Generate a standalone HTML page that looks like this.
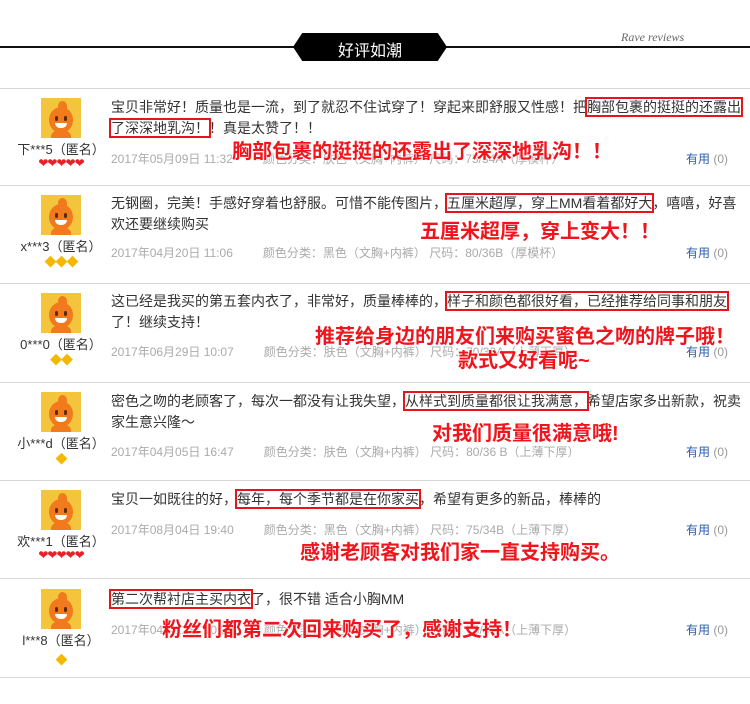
<!DOCTYPE html>
<html><head><meta charset="utf-8">
<style>
*{margin:0;padding:0;box-sizing:border-box}
body{width:750px;height:704px;background:#fff;position:relative;overflow:hidden;font-family:"Liberation Sans","Noto Sans CJK SC",sans-serif;color:#333}
.a{position:absolute;white-space:nowrap}
.sep{position:absolute;left:0;width:750px;height:1px;background:#d8d8d8}
.av{position:absolute;left:41px;width:40px;height:40px;background:#f4c53c;overflow:hidden}
.av .h{position:absolute;left:8px;top:9px;width:24px;height:26px;border-radius:50%;background:#f07a1c}
.av .t{position:absolute;left:17px;top:3px;width:9px;height:10px;border-radius:50% 50% 0 50%;background:#f07a1c}
.av .b{position:absolute;left:10px;top:32px;width:20px;height:12px;border-radius:50% 50% 0 0;background:#f07a1c}
.av .m{position:absolute;left:14px;top:25px;width:12px;height:5px;background:#fff;border-radius:0 0 6px 6px}
.av .e1,.av .e2{position:absolute;top:18px;width:3px;height:5px;background:#5a2a0a;border-radius:2px}
.av .e1{left:14px}.av .e2{left:23px}
.nm{position:absolute;left:0;width:122px;text-align:center;font-size:13px;color:#333}
.ic{position:absolute;left:0;width:122px;text-align:center;font-size:12px;letter-spacing:-1px}
.hrt{color:#e8202a}.dia{color:#f5b800}
.tx{position:absolute;left:111px;font-size:14px;line-height:21px;color:#333;white-space:nowrap}
.bx{outline:2px solid #e8141c;outline-offset:0px}
.mt{position:absolute;left:111px;font-size:12px;color:#aaa;white-space:nowrap}
.mt span{margin-left:30px}
.use{position:absolute;left:686px;font-size:12px;color:#999}
.use b{font-weight:normal;color:#2a5caa}
.an{position:absolute;color:#f0141c;font-weight:bold;font-size:20px;white-space:nowrap;text-shadow:0 0 2px #fff,0 0 2px #fff}
</style></head><body>
<div class="a" style="left:0;top:46px;width:750px;height:2px;background:#111"></div>
<div class="a" style="left:293px;top:33px;width:154px;height:28px;background:#000;clip-path:polygon(6% 0,94% 0,100% 50%,94% 100%,6% 100%,0 50%)"></div>
<div class="a" style="left:293px;top:37px;width:154px;text-align:center;color:#fff;font-size:16px">好评如潮</div>
<div class="a" style="left:621px;top:30px;font-family:'Liberation Serif',serif;font-style:italic;font-size:12px;color:#666">Rave reviews</div>

<div class="sep" style="top:88px"></div>
<div class="sep" style="top:185px"></div>
<div class="sep" style="top:283px"></div>
<div class="sep" style="top:382px"></div>
<div class="sep" style="top:480px"></div>
<div class="sep" style="top:578px"></div>
<div class="sep" style="top:677px"></div>

<!-- row 1 -->
<div class="av" style="top:98px"><div class="t"></div><div class="h"></div><div class="e1"></div><div class="e2"></div><div class="m"></div><div class="b"></div></div>
<div class="nm" style="top:139px">下***5（匿名）</div>
<div class="ic hrt" style="top:156px">❤❤❤❤❤</div>
<div class="tx" style="top:97px">宝贝非常好！质量也是一流，到了就忍不住试穿了！穿起来即舒服又性感！把<span class="bx">胸部包裹的挺挺的还露出</span><br><span class="bx">了深深地乳沟！</span>！真是太赞了！！</div>
<div class="mt" style="top:150px">2017年05月09日 11:32<span>颜色分类：肤色（文胸+内裤） 尺码：75/34A（厚模杯）</span></div>
<div class="use" style="top:150px"><b>有用</b> (0)</div>
<div class="an" style="left:232px;top:135px">胸部包裹的挺挺的还露出了深深地乳沟！！</div>

<!-- row 2 -->
<div class="av" style="top:195px"><div class="t"></div><div class="h"></div><div class="e1"></div><div class="e2"></div><div class="m"></div><div class="b"></div></div>
<div class="nm" style="top:236px">x***3（匿名）</div>
<div class="ic dia" style="top:253px">◆◆◆</div>
<div class="tx" style="top:193px">无钢圈，完美！手感好穿着也舒服。可惜不能传图片，<span class="bx">五厘米超厚，穿上MM看着都好大</span>，嘻嘻，好喜<br>欢还要继续购买</div>
<div class="mt" style="top:244px">2017年04月20日 11:06<span>颜色分类：黑色（文胸+内裤） 尺码：80/36B（厚模杯）</span></div>
<div class="use" style="top:244px"><b>有用</b> (0)</div>
<div class="an" style="left:420px;top:215px">五厘米超厚，穿上变大！！</div>

<!-- row 3 -->
<div class="av" style="top:293px"><div class="t"></div><div class="h"></div><div class="e1"></div><div class="e2"></div><div class="m"></div><div class="b"></div></div>
<div class="nm" style="top:334px">0***0（匿名）</div>
<div class="ic dia" style="top:351px">◆◆</div>
<div class="tx" style="top:291px">这已经是我买的第五套内衣了，非常好，质量棒棒的，<span class="bx">样子和颜色都很好看，已经推荐给同事和朋友</span><br>了！继续支持！</div>
<div class="mt" style="top:343px">2017年06月29日 10:07<span>颜色分类：肤色（文胸+内裤） 尺码：70/32A（上薄下厚）</span></div>
<div class="use" style="top:343px"><b>有用</b> (0)</div>
<div class="an" style="left:315px;top:320px">推荐给身边的朋友们来购买蜜色之吻的牌子哦！</div>
<div class="an" style="left:458px;top:344px">款式又好看呢~</div>

<!-- row 4 -->
<div class="av" style="top:392px"><div class="t"></div><div class="h"></div><div class="e1"></div><div class="e2"></div><div class="m"></div><div class="b"></div></div>
<div class="nm" style="top:433px">小***d（匿名）</div>
<div class="ic dia" style="top:450px">◆</div>
<div class="tx" style="top:391px">密色之吻的老顾客了，每次一都没有让我失望，<span class="bx">从样式到质量都很让我满意，</span>希望店家多出新款，祝卖<br>家生意兴隆～</div>
<div class="mt" style="top:443px">2017年04月05日 16:47<span>颜色分类：肤色（文胸+内裤） 尺码：80/36 B（上薄下厚）</span></div>
<div class="use" style="top:443px"><b>有用</b> (0)</div>
<div class="an" style="left:432px;top:417px">对我们质量很满意哦!</div>

<!-- row 5 -->
<div class="av" style="top:490px"><div class="t"></div><div class="h"></div><div class="e1"></div><div class="e2"></div><div class="m"></div><div class="b"></div></div>
<div class="nm" style="top:531px">欢***1（匿名）</div>
<div class="ic hrt" style="top:548px">❤❤❤❤❤</div>
<div class="tx" style="top:489px">宝贝一如既往的好，<span class="bx">每年，每个季节都是在你家买</span>，希望有更多的新品，棒棒的</div>
<div class="mt" style="top:521px">2017年08月04日 19:40<span>颜色分类：黑色（文胸+内裤） 尺码：75/34B（上薄下厚）</span></div>
<div class="use" style="top:521px"><b>有用</b> (0)</div>
<div class="an" style="left:300px;top:536px">感谢老顾客对我们家一直支持购买。</div>

<!-- row 6 -->
<div class="av" style="top:589px"><div class="t"></div><div class="h"></div><div class="e1"></div><div class="e2"></div><div class="m"></div><div class="b"></div></div>
<div class="nm" style="top:630px">l***8（匿名）</div>
<div class="ic dia" style="top:651px">◆</div>
<div class="tx" style="top:589px"><span class="bx">第二次帮衬店主买内衣</span>了，很不错 适合小胸MM</div>
<div class="mt" style="top:621px">2017年04月12日 10:30<span>颜色分类：肤色（文胸+内裤） 尺码：75/34A（上薄下厚）</span></div>
<div class="use" style="top:621px"><b>有用</b> (0)</div>
<div class="an" style="left:162px;top:613px">粉丝们都第二次回来购买了，感谢支持！</div>
</body></html>
